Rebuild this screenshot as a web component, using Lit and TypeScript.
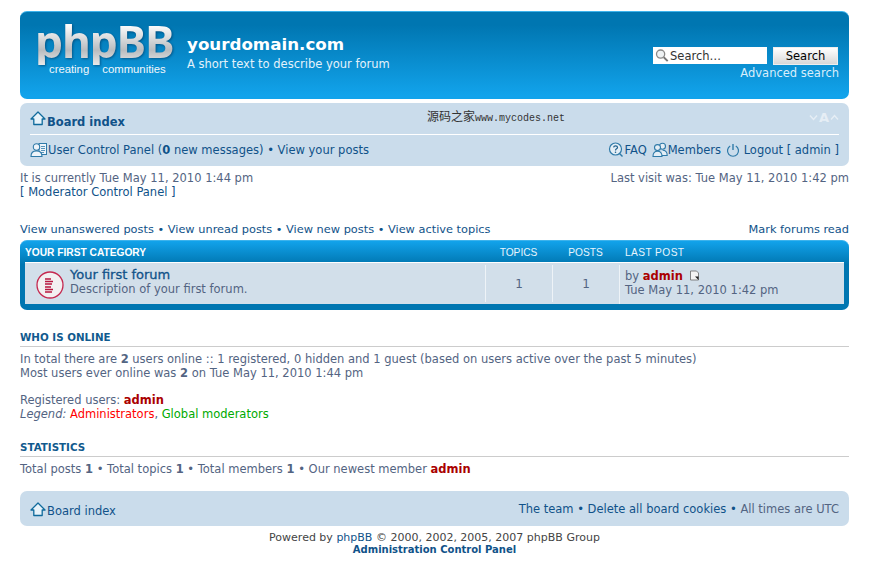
import { LitElement, html, css, svg } from "lit";
import { customElement } from "lit/decorators.js";

const home = svg`<svg class="ic" width="16" height="15" viewBox="0 0 16 15"><path d="M8 1 L15 8 H12.2 V13.5 H3.8 V8 H1 Z" fill="#e8f3fa" stroke="#0f6a9c" stroke-width="1.3" stroke-linejoin="round"/></svg>`;
const ucp = svg`<svg class="ic" width="18" height="16" viewBox="0 0 18 16"><rect x="9" y="1.5" width="7.5" height="11" fill="#eef4fa" stroke="#2f7aa8"/><path d="M11 4.5h4M11 6.5h4M11 8.5h4M11 10.5h3" stroke="#2f7aa8" stroke-width=".8"/><circle cx="6.5" cy="5" r="3.2" fill="#eef4fa" stroke="#2f7aa8" stroke-width="1.1"/><path d="M1 14.5c0-4 2.4-5.6 5.5-5.6s5.5 1.6 5.5 5.6z" fill="#eef4fa" stroke="#2f7aa8" stroke-width="1.1"/></svg>`;
const faq = svg`<svg class="ic" width="16" height="16" viewBox="0 0 16 16"><circle cx="7.5" cy="7" r="6" fill="#e4eef6" stroke="#2f7aa8" stroke-width="1.2"/><path d="M11.5 11.5l3 3" stroke="#2f7aa8" stroke-width="1.4"/><path d="M5.6 5.4c.2-2 3.8-2 3.9 0 0 1.5-2 1.4-2 3" fill="none" stroke="#1d5f8c" stroke-width="1.2"/><circle cx="7.5" cy="10.2" r=".8" fill="#1d5f8c"/></svg>`;
const members = svg`<svg class="ic" width="16" height="16" viewBox="0 0 16 16"><circle cx="10.5" cy="4.2" r="3" fill="#e4eef6" stroke="#2f7aa8" stroke-width="1.1"/><path d="M8 13.5h7.2c0-3.5-1.6-5.2-4.6-5.2" fill="#e4eef6" stroke="#2f7aa8" stroke-width="1.1"/><circle cx="5.5" cy="5.6" r="3" fill="#e4eef6" stroke="#2f7aa8" stroke-width="1.1"/><path d="M1 14.5c0-3.6 1.6-5.2 4.5-5.2s4.5 1.6 4.5 5.2z" fill="#e4eef6" stroke="#2f7aa8" stroke-width="1.1"/></svg>`;
const logout = svg`<svg class="ic" width="14" height="14" viewBox="0 0 14 14"><path d="M4.2 3a5.5 5.5 0 1 0 5.6 0" fill="none" stroke="#2f7aa8" stroke-width="1.2"/><path d="M7 1v6" stroke="#2f7aa8" stroke-width="1.4"/></svg>`;
const lens = svg`<svg width="14" height="15" viewBox="0 0 15 15"><circle cx="6" cy="6" r="4.4" fill="#eef2f4" stroke="#8a8a8a" stroke-width="1.4"/><path d="M9.4 9.4l4.2 4.2" stroke="#777" stroke-width="2"/></svg>`;
const forumIcon = svg`<svg width="30" height="30" viewBox="0 0 30 30"><circle cx="15" cy="15" r="13" fill="#f3f0f1" stroke="#c5284f" stroke-width="1.3"/><path d="M10 9h6M10 11.5h8M10 14h7M10 17h6M10 19.5h8M10 22h7" stroke="#b8173f" stroke-width="1.4"/></svg>`;
const latest = svg`<svg class="latest" width="11" height="11" viewBox="0 0 11 11"><path d="M1.5 1h6l2 2v7h-8z" fill="#f4f4f4" stroke="#777" stroke-width=".9"/><path d="M6 6.5l3.5 3.5v-3.5z" fill="#222"/></svg>`;
const chevDown = svg`<svg width="9" height="7" viewBox="0 0 9 7"><path d="M1 1.5l3.5 4 3.5-4" fill="none" stroke="#e6eef5" stroke-width="1.4"/></svg>`;
const chevUp = svg`<svg width="9" height="7" viewBox="0 0 9 7"><path d="M1 5.5l3.5-4 3.5 4" fill="none" stroke="#e6eef5" stroke-width="1.4"/></svg>`;

@customElement("app-root")
export class AppRoot extends LitElement {
  static styles = css`
    :host { display: block; width: 869px; height: 561px; overflow: hidden; background: #fff; font: 11.5px/14px "DejaVu Sans", Verdana, sans-serif; color: #536482; }
    * { box-sizing: border-box; }
    .wrap { padding: 11px 20px 0 20px; display: flex; flex-direction: column; }
    a { color: #105289; }
    .ic { flex: none; }
    .head { height: 88px; border-radius: 7px; border-top: 1px solid #3db3ec; background: linear-gradient(#0076b1 0, #0076b1 15%, #12a3eb 96%); color: #fff; display: flex; justify-content: space-between; padding: 0 10px 0 15px; }
    .brand { display: flex; align-items: flex-start; }
    .logo { width: 152px; position: relative; padding-top: 4px; }
    .logo b { display: block; height: 49px; font: 700 44.5px/50px "Noto Sans", sans-serif; letter-spacing: -1.2px; background: linear-gradient(#fbfbfb 20%, #b9bcbf 70%, #e8e8e8); -webkit-background-clip: text; background-clip: text; color: transparent; filter: drop-shadow(1px 1px 1px rgba(0,50,90,.55)); white-space: nowrap; }
    .logo span { position: absolute; left: 14px; top: 51px; font: 11.3px/13px "Liberation Sans", sans-serif; color: #f1f7fb; word-spacing: 10px; white-space: nowrap; }
    .title { padding-top: 22px; }
    .title h1 { margin: 0; font: 700 16.7px/20px "DejaVu Sans", sans-serif; color: #fff; }
    .title p { margin: 3px 0 0; line-height: 14px; color: #e4f2fb; }
    .search { padding-top: 35px; display: flex; flex-direction: column; align-items: flex-end; }
    .sr { display: flex; gap: 6px; margin-right: 1px; }
    .sinput { width: 114px; height: 17px; background: #fff; display: flex; align-items: center; gap: 1px; padding-left: 2px; color: #333; }
    .sbtn { width: 65px; height: 18px; background: linear-gradient(#fff, #d8d8d8); border: 1px solid #eee; color: #000; text-align: center; line-height: 16px; }
    .adv { color: #d9eefb; margin-top: 1px; }
    .nav { margin-top: 4px; height: 63px; border-radius: 7px; background: #cadceb; padding: 0 10px; }
    .nav1 { height: 32px; border-bottom: 1px solid #fff; display: flex; align-items: center; }
    .nav1 b { color: #105289; margin-left: 1px; padding-top: 6px; white-space: nowrap; }
    .mark { flex: 1; padding-left: 302px; font: 12px/14px "Noto Sans CJK SC", sans-serif; color: #333; white-space: nowrap; padding-bottom: 3px; }
    .mark i { font: normal 10px/14px "Liberation Mono", monospace; }
    .fs { color: #e6eef5; font-size: 13px; font-weight: 700; padding-bottom: 2px; display: flex; align-items: center; gap: 1px; }
    .nav2 { height: 30px; display: flex; justify-content: space-between; align-items: center; color: #105289; }
    .nav2 > div, .it { display: flex; align-items: center; white-space: pre; }
    .r { gap: 5px; }
    .info { display: flex; justify-content: space-between; padding-top: 5px; height: 56px; }
    .blue { color: #105289; }
    .links { display: flex; justify-content: space-between; height: 15px; line-height: 14px; color: #105289; font-size: 11.35px; }
    .cat { margin-top: 3px; height: 70px; border-radius: 7px; background: linear-gradient(#12a3eb 0, #0076b1 34%, #0076b1 100%); padding: 0 5px; border-top: 1px solid #3db3ec; }
    .cath { height: 21px; display: grid; grid-template-columns: 460px 67px 67px 1fr; align-items: center; color: #fff; font: 10.2px/14px "Liberation Sans", sans-serif; padding-top: 3px; }
    .cath span { text-align: center; color: #e8f5fd; }
    .cath span:last-child { text-align: left; padding-left: 6px; letter-spacing: .4px; }
    .row { height: 42px; background: #d2dfea; border-top: 1px solid #fff; display: grid; grid-template-columns: 460px 67px 67px 1fr; }
    .fcell { display: flex; align-items: center; padding-left: 10px; gap: 5px; }
    .fcell svg { flex: none; margin-top: 2px; }
    .ftext { padding-bottom: 3px; }
    .fname { font-size: 13px; color: #105289; line-height: 14px; -webkit-text-stroke: .3px #105289; }
    .num { border-left: 1px solid #eef3f7; margin: 2px 0; display: flex; align-items: center; justify-content: center; font-size: 12px; }
    .last { border-left: 1px solid #eef3f7; margin-top: 2px; padding: 4px 0 0 5px; }
    .adm { color: #a00; font-weight: 700; }
    .latest { vertical-align: -1px; margin-left: 2px; }
    h3 { margin: 0; font: 700 10.3px/13px "DejaVu Sans", sans-serif; color: #115a8e; text-transform: uppercase; border-bottom: 1px solid #ccc; padding-bottom: 2px; }
    .on { margin-top: 21px; }
    .sec p { margin: 0; padding-top: 5px; }
    .sec b { color: #536482; }
    .mt { margin-top: 13px; }
    .legend em { font-style: italic; }
    .red { color: #f00; } .green { color: #0a0; }
    .stats { margin-top: 20px; }
    .foot { margin-top: 15px; height: 35px; border-radius: 7px; background: #cadceb; display: flex; justify-content: space-between; align-items: center; padding: 0 10px; color: #105289; }
    .bi { display: flex; align-items: center; gap: 1px; padding-top: 1px; }
    .bi span { padding-top: 4px; }
    .muted { color: #536482; }
    .copy { text-align: center; padding-top: 6px; font-size: 11px; line-height: 12px; color: #444; }
    .copy a { color: #105289; }
    .copy b { color: #105289; font-size: 10px; }
  `;
  render() {
    return html`<div class="wrap">
      <div class="head">
        <div class="brand">
          <div class="logo"><b>phpBB</b><span>creating communities</span></div>
          <div class="title"><h1>yourdomain.com</h1><p>A short text to describe your forum</p></div>
        </div>
        <div class="search">
          <div class="sr"><div class="sinput">${lens}<span>Search…</span></div><div class="sbtn">Search</div></div>
          <div class="adv">Advanced search</div>
        </div>
      </div>
      <div class="nav">
        <div class="nav1">${home}<b>Board index</b>
          <div class="mark">源码之家<i>www.mycodes.net</i></div>
          <div class="fs">${chevDown}<span>A</span>${chevUp}</div></div>
        <div class="nav2">
          <div>${ucp}<span>User Control Panel (<b>0</b> new messages) • View your posts</span></div>
          <div class="r"><span class="it">${faq}FAQ</span><span class="it">${members}Members</span><span class="it">${logout} Logout [ admin ]</span></div>
        </div>
      </div>
      <div class="info"><div>It is currently Tue May 11, 2010 1:44 pm<br><span class="blue">[ Moderator Control Panel ]</span></div><div>Last visit was: Tue May 11, 2010 1:42 pm</div></div>
      <div class="links"><span>View unanswered posts • View unread posts • View new posts • View active topics</span><span>Mark forums read</span></div>
      <div class="cat">
        <div class="cath"><b>YOUR FIRST CATEGORY</b><span>TOPICS</span><span>POSTS</span><span>LAST POST</span></div>
        <div class="row">
          <div class="fcell">${forumIcon}<div class="ftext"><div class="fname">Your first forum</div><div>Description of your first forum.</div></div></div>
          <div class="num">1</div><div class="num">1</div>
          <div class="last">by <span class="adm">admin</span> ${latest}<br>Tue May 11, 2010 1:42 pm</div>
        </div>
      </div>
      <div class="sec on"><h3>Who is online</h3>
        <p>In total there are <b>2</b> users online :: 1 registered, 0 hidden and 1 guest (based on users active over the past 5 minutes)<br>Most users ever online was <b>2</b> on Tue May 11, 2010 1:44 pm</p>
        <div class="mt">Registered users: <span class="adm">admin</span></div>
        <div class="legend"><em>Legend:</em> <span class="red">Administrators</span>, <span class="green">Global moderators</span></div>
      </div>
      <div class="sec stats"><h3>Statistics</h3>
        <p>Total posts <b>1</b> • Total topics <b>1</b> • Total members <b>1</b> • Our newest member <span class="adm">admin</span></p>
      </div>
      <div class="foot"><div class="bi">${home}<span>Board index</span></div><div>The team • Delete all board cookies • <span class="muted">All times are UTC</span></div></div>
      <div class="copy">Powered by <a>phpBB</a> © 2000, 2002, 2005, 2007 phpBB Group<br><b>Administration Control Panel</b></div>
    </div>`;
  }
}
